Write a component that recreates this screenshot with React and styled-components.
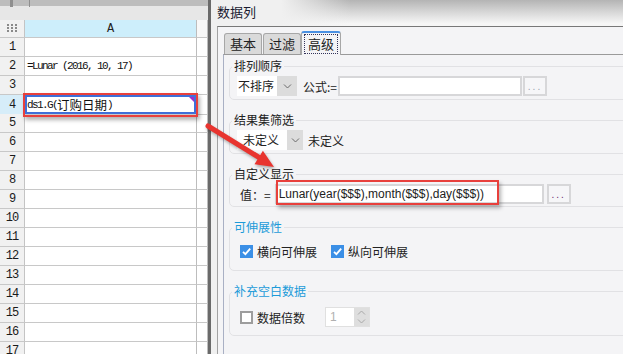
import React from "react";
import styled, { createGlobalStyle } from "styled-components";

const GlobalStyle = createGlobalStyle`
  html, body { margin: 0; padding: 0; }
  body { width: 623px; height: 354px; overflow: hidden; background: #fff; }
`;

const Screen = styled.div`
  position: relative;
  display: flex;
  width: 623px;
  height: 354px;
  overflow: hidden;
  font-family: "Noto Sans CJK SC", "Liberation Sans", sans-serif;
  color: #222;
`;

/* ---------- spreadsheet ---------- */

const Sheet = styled.div`
  width: 208px;
  flex: none;
  display: flex;
  flex-direction: column;
  background: #fff;
  font-family: "Liberation Mono", "Noto Sans CJK SC", monospace;
`;

const SheetTop = styled.div`
  height: 20px;
  flex: none;
  display: flex;
  background: linear-gradient(#bdbdbd 0 6px, #e7e7e7 6px 100%);
`;

const TopTick = styled.span`
  width: ${(p) => p.$w}px;
  height: 7px;
  margin-left: ${(p) => p.$at}px;
  background: #8f8f8f;
`;

const GridRow = styled.div`
  display: grid;
  grid-template-columns: 25px 172px 11px;
  height: ${(p) => (p.$head ? 18 : 19)}px;
  flex: none;
`;

const RowHead = styled.div`
  display: flex;
  align-items: center;
  justify-content: center;
  border-right: 1px solid #c4c4c4;
  border-bottom: 1px solid #c8c8c8;
  background: ${(p) => (p.$active ? "#d6edf9" : "#f1f1f1")};
  font-size: 12px;
  letter-spacing: -1px;
  color: #1a1a1a;
`;

const ColHead = styled.div`
  display: flex;
  align-items: center;
  justify-content: center;
  border-right: 1px solid #bdbdbd;
  border-bottom: 1px solid #c8c8c8;
  background: ${(p) => (p.$active ? "#cdeefb" : "#f8f8f8")};
  font-size: 12px;
`;

const Cell = styled.div`
  position: relative;
  display: flex;
  align-items: center;
  padding-left: 2px;
  border-right: 1px solid #bdbdbd;
  border-bottom: 1px solid #c8c8c8;
  font-size: 11px;
  letter-spacing: -1.6px;
  white-space: nowrap;
  color: #111;
  box-shadow: ${(p) => (p.$selected ? "inset 0 0 0 2px #3f6fd8" : "none")};

  &::after {
    content: "";
    display: ${(p) => (p.$selected ? "block" : "none")};
    position: absolute;
    right: 2px;
    top: 2px;
    border-top: 5px solid #9b2fd0;
    border-left: 5px solid transparent;
  }
`;

const Cjk = styled.span`
  font-family: "Noto Sans CJK SC", sans-serif;
  font-size: 12.5px;
  letter-spacing: 0;
`;

/* ---------- dialog ---------- */

const Dialog = styled.div`
  flex: 1;
  min-width: 0;
  display: flex;
  flex-direction: column;
  border-left: 3px solid #6a6a6a;
  background: #f0f0f0;
`;

const TitleBar = styled.div`
  height: 26px;
  flex: none;
  display: flex;
  align-items: center;
  padding: 0 0 3px 6px;
  box-sizing: border-box;
  font-size: 13px;
  color: #1b1b30;
  background: linear-gradient(to right, #f0f0f0 0, #f0f0f0 70px, rgba(240, 240, 240, 0) 140px),
    linear-gradient(#b4b4b4, #d6d6d6 45%, #f6f6f6 90%);
`;

const Body = styled.div`
  flex: 1;
  display: flex;
  flex-direction: column;
  margin-left: 6px;
  padding: 4px 0 0 5px;
  border-top: 1px solid #787878;
  border-left: 1px solid #a2a2a2;
  background: #f4f4f6;
`;

const TabsRow = styled.div`
  display: flex;
  align-items: flex-end;
  gap: 1px;
  height: 24px;
  padding-left: 1px;
  margin-bottom: -1px;
`;

const Tab = styled.div`
  position: relative;
  z-index: ${(p) => (p.$active ? 1 : 0)};
  height: ${(p) => (p.$active ? 24 : 21)}px;
  margin-bottom: ${(p) => (p.$active ? 0 : 1)}px;
  margin-left: ${(p) => (p.$active ? -1 : 0)}px;
  padding: ${(p) => (p.$active ? "3px" : "0 5px")};
  box-sizing: border-box;
  display: flex;
  align-items: center;
  border: 1px solid #a7a7a7;
  border-bottom: none;
  border-top: ${(p) => (p.$active ? "2px solid #4a90e2" : "1px solid #a7a7a7")};
  border-radius: 3px 3px 0 0;
  background: ${(p) => (p.$active ? "#f4f4f6" : "#dadada")};
  font-size: 13px;
  line-height: 18px;
`;

const FocusRing = styled.span`
  padding: 0 3px;
  outline: 1px dotted #33335a;
`;

const Panel = styled.div`
  flex: 1;
  display: flex;
  flex-direction: column;
  gap: 12px;
  padding: 3px 0 0 5px;
  border-top: 1px solid #9a9a9a;
  border-left: 1px solid #a9b0c4;
`;

const Group = styled.fieldset`
  margin: 0 -12px 0 0;
  padding: ${(p) => p.$pad} 0 ${(p) => p.$pad2} 2px;
  border: 1px solid #e1e1e4;
  border-radius: 5px;
  min-width: 0;
`;

const Legend = styled.legend`
  padding: 0 2px;
  font-size: 12px;
  line-height: 16px;
  color: ${(p) => (p.$blue ? "#1c9bd9" : "#222")};
`;

const Row = styled.div`
  display: flex;
  align-items: center;
  height: 20px;
  margin-left: ${(p) => p.$indent}px;
  font-size: 12px;
`;

const Gap = styled.span`
  width: ${(p) => p.$w}px;
  flex: none;
`;

const Select = styled.div`
  display: flex;
  height: 20px;
`;

const SelectValue = styled.span`
  width: ${(p) => p.$w}px;
  padding-left: ${(p) => p.$pl}px;
  box-sizing: border-box;
  background: #fff;
  line-height: 20px;
`;

const SelectArrow = styled.span`
  width: ${(p) => p.$w}px;
  display: flex;
  align-items: center;
  justify-content: center;
  background: #dcdcdc;
`;

const TextField = styled.div`
  width: ${(p) => p.$w}px;
  height: 20px;
  box-sizing: border-box;
  display: flex;
  align-items: center;
  padding-left: 2px;
  border: 2px solid #d7d7d9;
  background: #fff;
  font-family: "Liberation Sans", Arial, sans-serif;
  font-size: 12px;
  white-space: nowrap;
  overflow: hidden;
`;

const DotsButton = styled.div`
  width: 24px;
  height: 20px;
  box-sizing: border-box;
  display: flex;
  align-items: flex-end;
  justify-content: center;
  padding-bottom: 3px;
  border: 2px solid #d7d7d9;
  background: #f6f6f8;
  font-family: "Liberation Sans", sans-serif;
  font-size: 10px;
  line-height: 8px;
  letter-spacing: 2px;
  color: ${(p) => p.$tone};
`;

const Box = styled.span`
  width: 13px;
  height: 13px;
  box-sizing: border-box;
  display: flex;
  align-items: center;
  justify-content: center;
  flex: none;
  margin-right: 4px;
  background: ${(p) => (p.$checked ? "#3b8fe6" : "#fff")};
  border: ${(p) => (p.$checked ? "none" : "2px solid #9d9d9d")};
`;

const Spinner = styled.div`
  display: flex;
  height: 20px;
  border: 1px solid #e0e0e0;
  box-sizing: border-box;
`;

const SpinValue = styled.span`
  width: 28px;
  padding-left: 4px;
  box-sizing: border-box;
  background: #fff;
  color: #b0b0b0;
  line-height: 18px;
  font-family: "Liberation Sans", sans-serif;
`;

const SpinArrows = styled.span`
  width: 15px;
  display: flex;
  flex-direction: column;
  align-items: center;
  justify-content: space-around;
  background: #dedede;
`;

/* ---------- annotations ---------- */

const Highlight = styled.div`
  position: absolute;
  left: ${(p) => p.$x}px;
  top: ${(p) => p.$y}px;
  width: ${(p) => p.$w}px;
  height: ${(p) => p.$h}px;
  box-sizing: border-box;
  border: 2px solid #e8403c;
  box-shadow: 2px 3px 4px rgba(0, 0, 0, 0.3);
  pointer-events: none;
`;

const ArrowSvg = styled.svg`
  position: absolute;
  left: 200px;
  top: 118px;
  filter: drop-shadow(1px 2px 1.5px rgba(0, 0, 0, 0.3));
`;

const Chevron = ({ up, color = "#6b6b6b" }) => (
  <svg width="9" height="5" viewBox="0 0 9 5">
    <path
      d={up ? "M1 4.5 L4.5 1 L8 4.5" : "M1 0.5 L4.5 4 L8 0.5"}
      fill="none"
      stroke={color}
      strokeWidth="1"
    />
  </svg>
);

const CornerDots = () => (
  <svg width="12" height="9" viewBox="0 0 12 9">
    {[0, 1, 2].map((r) =>
      [0, 1, 2].map((c) => (
        <rect key={`${r}${c}`} x={c * 4 + 1} y={r * 3} width="2" height="2" fill="#8a8a8a" />
      ))
    )}
  </svg>
);

const Check = ({ checked }) => (
  <Box $checked={checked}>
    {checked && (
      <svg width="11" height="11" viewBox="0 0 11 11">
        <path d="M2 5.8 L4.4 8.2 L9.2 2.6" fill="none" stroke="#fff" strokeWidth="1.8" />
      </svg>
    )}
  </Box>
);

const rows = Array.from({ length: 17 }, (_, i) => i + 1);

const renderCell = (n) => {
  if (n === 2) return "=Lunar (2016, 10, 17)";
  if (n === 4)
    return (
      <>
        ds1.G(<Cjk>订购日期</Cjk>)
      </>
    );
  return null;
};

export default function App() {
  return (
    <Screen>
      <GlobalStyle />
      <Sheet>
        <SheetTop>
          <TopTick $at={10} $w={3} />
          <TopTick $at={16} $w={1} />
        </SheetTop>
        <GridRow $head>
          <RowHead>
            <CornerDots />
          </RowHead>
          <ColHead $active>A</ColHead>
          <ColHead />
        </GridRow>
        {rows.map((n) => (
          <GridRow key={n}>
            <RowHead $active={n === 4}>{n}</RowHead>
            <Cell $selected={n === 4}>{renderCell(n)}</Cell>
            <Cell />
          </GridRow>
        ))}
      </Sheet>

      <Dialog>
        <TitleBar>数据列</TitleBar>
        <Body>
          <TabsRow>
            <Tab>基本</Tab>
            <Tab>过滤</Tab>
            <Tab $active>
              <FocusRing>高级</FocusRing>
            </Tab>
          </TabsRow>
          <Panel>
            <Group $pad="2px" $pad2="3px">
              <Legend>排列顺序</Legend>
              <Row $indent={5}>
                <Select>
                  <SelectValue $w={40} $pl={1}>不排序</SelectValue>
                  <SelectArrow $w={20}>
                    <Chevron />
                  </SelectArrow>
                </Select>
                <Gap $w={6} />
                公式:=
                <Gap $w={1} />
                <TextField $w={184} />
                <Gap $w={1} />
                <DotsButton $tone="#9aa0b0">...</DotsButton>
              </Row>
            </Group>

            <Group $pad="2px" $pad2="3px">
              <Legend>结果集筛选</Legend>
              <Row $indent={5}>
                <Select>
                  <SelectValue $w={50} $pl={6}>未定义</SelectValue>
                  <SelectArrow $w={16}>
                    <Chevron />
                  </SelectArrow>
                </Select>
                <Gap $w={5} />
                未定义
              </Row>
            </Group>

            <Group $pad="2px" $pad2="2px">
              <Legend>自定义显示</Legend>
              <Row $indent={8}>
                值：=
                <Gap $w={4} />
                <TextField $w={269}>Lunar(year($$$),month($$$),day($$$))</TextField>
                <Gap $w={3} />
                <DotsButton $tone="#6a2a6a">...</DotsButton>
              </Row>
            </Group>

            <Group $pad="6px" $pad2="9px">
              <Legend $blue>可伸展性</Legend>
              <Row $indent={8}>
                <Check checked />
                横向可伸展
                <Gap $w={14} />
                <Check checked />
                纵向可伸展
              </Row>
            </Group>

            <Group $pad="8px" $pad2="8px">
              <Legend $blue>补充空白数据</Legend>
              <Row $indent={8}>
                <Check />
                数据倍数
                <Gap $w={20} />
                <Spinner>
                  <SpinValue>1</SpinValue>
                  <SpinArrows>
                    <Chevron up color="#a8a8a8" />
                    <Chevron color="#a8a8a8" />
                  </SpinArrows>
                </Spinner>
              </Row>
            </Group>
          </Panel>
        </Body>
      </Dialog>

      <Highlight $x={23} $y={93} $w={175} $h={24} />
      <Highlight $x={276} $y={180} $w={223} $h={25} />
      <ArrowSvg width="90" height="60" viewBox="0 0 90 60">
        <line x1="8" y1="8" x2="60" y2="40" stroke="#e8342f" strokeWidth="5" strokeLinecap="round" />
        <polygon points="74,49 54.5,46.3 62.9,32.7" fill="#e8342f" />
      </ArrowSvg>
    </Screen>
  );
}
